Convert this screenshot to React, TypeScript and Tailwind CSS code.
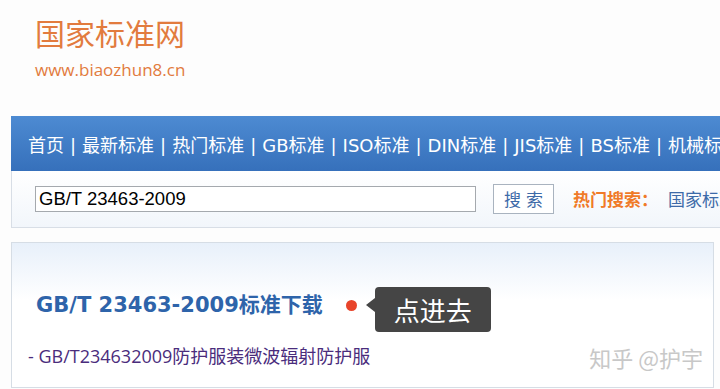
import React from "react";

export default function App() {
  const nav = ["首页", "最新标准", "热门标准", "GB标准", "ISO标准", "DIN标准", "JIS标准", "BS标准", "机械标准"];
  return (
    <div className="w-[720px] h-[389px] overflow-hidden bg-[#fdfdfd] relative" style={{ fontFamily: '"DejaVu Sans", "Noto Sans CJK SC", sans-serif' }}>
      <div className="pl-[35px] pt-[13px] h-[116px]">
        <div className="text-[30px] leading-[38px] text-[#e27b3e]" style={{ fontFamily: '"Noto Sans CJK SC", sans-serif' }}>国家标准网</div>
        <div className="mt-[8px] text-[17px] leading-[22px] text-[#e27b3e]" style={{ fontFamily: '"Open Sans", "Noto Sans CJK SC", sans-serif' }}>www.biaozhun8.cn</div>
      </div>
      <div className="ml-[11px]">
        <div className="h-[55px] bg-gradient-to-b from-[#4d8bd2] to-[#3670bb] flex items-center pl-[17px] pt-[3px] whitespace-nowrap text-white text-[18px] overflow-hidden">
          {nav.map((n, i) => (
            <React.Fragment key={n}>
              {i > 0 && <span className="mx-[6px]">|</span>}
              <span className="shrink-0">{n}</span>
            </React.Fragment>
          ))}
        </div>
        <div className="h-[57px] border-l border-b border-[#d8dee6] bg-gradient-to-b from-[#ffffff] to-[#f2f6fb] flex items-center pl-[23px] whitespace-nowrap overflow-hidden">
          <div className="shrink-0 w-[441px] h-[26px] border border-[#a5a9ae] bg-white flex items-center pl-[3px] text-[18.5px] text-black" style={{ fontFamily: '"Liberation Sans", sans-serif' }}>GB/T 23463-2009</div>
          <div className="shrink-0 ml-[17px] w-[61px] h-[30px] border border-[#a9b3bf] bg-white flex items-center justify-center text-[17px] text-[#3d6aa8] tracking-[5px] pl-[5px]" style={{ fontFamily: '"Noto Sans CJK SC", sans-serif' }}>搜索</div>
          <div className="shrink-0 ml-[19px] text-[17px] font-bold text-[#f07a28]" style={{ fontFamily: '"Noto Sans CJK SC", sans-serif' }}>热门搜索：</div>
          <div className="shrink-0 ml-[10px] text-[17px] text-[#3d6aa8]" style={{ fontFamily: '"Noto Sans CJK SC", sans-serif' }}>国家标准</div>
        </div>
      </div>
      <div className="ml-[11px] mt-[14px] w-[703px] h-[146px] border border-[#d6dde5] bg-gradient-to-b from-[#e8f0fa] via-[#ffffff] via-[40%] to-[#ffffff] relative">
        <div className="pt-[48px] pl-[24px] flex items-center">
          <span className="text-[21px] font-bold text-[#2e64aa] leading-[28px]">GB/T 23463-2009标准下载</span>
          <span className="ml-[23px] w-[11px] h-[11px] rounded-full bg-[#e8442a] shrink-0"></span>
          <div className="ml-[18px] relative w-[116px] h-[28px]">
            <div className="absolute left-0 top-[-4px] w-[116px] h-[45px] rounded-[4px] bg-[#454545] text-white text-[26px] flex items-center justify-center" style={{ fontFamily: '"Noto Sans CJK SC", sans-serif' }}>点进去</div>
            <div className="absolute left-[-9px] top-[7px] w-0 h-0 border-y-[7px] border-y-transparent border-r-[9px] border-r-[#454545]"></div>
          </div>
        </div>
        <div className="mt-[25px] pl-[16px] flex items-center">
          <span className="text-[18px] leading-[24px] text-[#4a2c7c]" style={{ fontFamily: '"Open Sans", "Noto Sans CJK SC", sans-serif' }}>- GB/T234632009防护服装微波辐射防护服</span>
        </div>
        <div className="absolute right-[10px] bottom-[15px] text-[22px] leading-[30px] text-[#c8c8c8]" style={{ fontFamily: '"Noto Sans CJK SC", sans-serif' }}>知乎 @护宇</div>
      </div>
    </div>
  );
}
